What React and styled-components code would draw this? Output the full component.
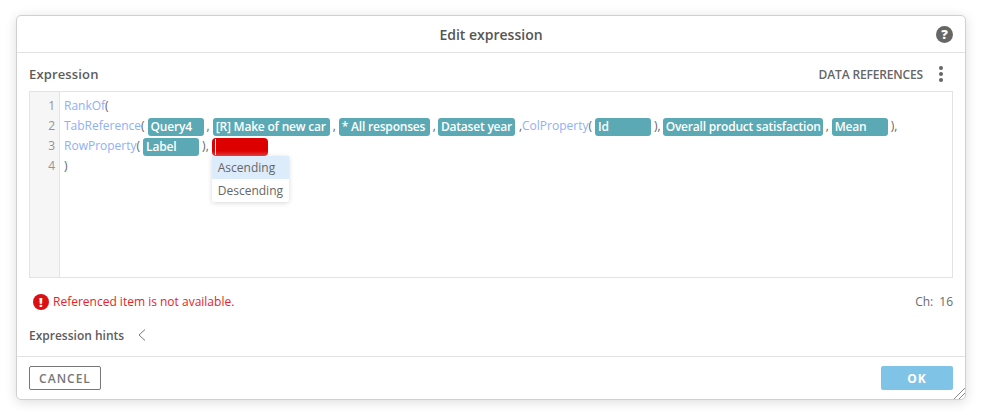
import styled, { createGlobalStyle } from "styled-components";

const GlobalStyle = createGlobalStyle`
  html, body {
    margin: 0;
    background: #fff;
    font-family: "Open Sans", "Liberation Sans", sans-serif;
  }
`;

const Page = styled.div`
  width: 982px;
  height: 415px;
  padding: 15px 16px;
  box-sizing: border-box;
  overflow: hidden;
`;

const Dialog = styled.div`
  position: relative;
  width: 950px;
  height: 385px;
  box-sizing: border-box;
  display: flex;
  flex-direction: column;
  background: #fff;
  border: 1px solid #d0d0d0;
  border-radius: 5px;
  box-shadow: 0 2px 12px rgba(0, 0, 0, 0.14);
`;

const Header = styled.header`
  height: 37px;
  flex: none;
  box-sizing: border-box;
  display: flex;
  align-items: center;
  justify-content: center;
  position: relative;
  border-bottom: 1px solid #e2e2e2;
  font-size: 14px;
  font-weight: 600;
  color: #555;
`;

const HelpIcon = styled.span`
  position: absolute;
  right: 12px;
  top: 10px;
  width: 17px;
  height: 17px;
  border-radius: 50%;
  background: #666;
  color: #fff;
  font-size: 13px;
  font-weight: 800;
  line-height: 17px;
  text-align: center;
`;

const Body = styled.div`
  flex: 1;
  display: flex;
  flex-direction: column;
  padding: 0 12px;
`;

const SectionBar = styled.div`
  height: 38px;
  flex: none;
  box-sizing: border-box;
  padding-top: 4px;
  display: flex;
  align-items: center;
  justify-content: space-between;
`;

const Label = styled.span`
  font-size: 12px;
  font-weight: 600;
  color: #5c5c5c;
`;

const SectionTitle = styled(Label)`
  font-size: 13px;
  letter-spacing: 0.15px;
`;

const BarActions = styled.div`
  display: flex;
  align-items: center;
  gap: 16px;
  font-size: 12px;
  font-weight: 600;
  letter-spacing: -0.15px;
  color: #666;
`;

const Kebab = styled.span`
  display: flex;
  flex-direction: column;
  gap: 2px;
  margin-right: 10px;
  i {
    width: 4px;
    height: 4px;
    border-radius: 50%;
    background: #666;
  }
`;

const Editor = styled.div`
  height: 187px;
  flex: none;
  box-sizing: border-box;
  display: flex;
  border: 1px solid #e3e3e3;
`;

const Gutter = styled.div`
  width: 30px;
  flex: none;
  box-sizing: border-box;
  padding: 5px 4px 0 0;
  background: #f6f6f6;
  border-right: 1px solid #e3e3e3;
  text-align: right;
`;

const LineNo = styled.div`
  height: 20px;
  line-height: 18px;
  font-size: 12px;
  color: #949494;
`;

const Code = styled.div`
  flex: 1;
  padding: 5px 0 0 4px;
`;

const CodeLine = styled.div`
  height: 20px;
  display: flex;
  align-items: flex-start;
  font-size: 12px;
  line-height: 18px;
  color: #666;
  white-space: pre;
`;

const Fn = styled.span`
  color: #8fb0f5;
`;

const Chip = styled.span`
  position: relative;
  flex: none;
  box-sizing: border-box;
  width: ${(p) => p.$w}px;
  height: 18px;
  margin: 1px ${(p) => p.$mr ?? 3}px 0 ${(p) => p.$ml ?? 3}px;
  padding: 0 3px;
  border-radius: 3px;
  background: #5aa9b4;
  color: #fff;
  font-size: 12px;
  font-weight: 600;
  letter-spacing: -0.2px;
  line-height: 18px;
`;

const ErrorChip = styled(Chip)`
  border-radius: 4px;
  background: linear-gradient(#dc0000 0, #dc0000 72%, #e44444 100%);
  &::before {
    content: "";
    position: absolute;
    left: 3px;
    top: 1px;
    bottom: 1px;
    width: 1px;
    background: #fff;
  }
`;

const Dropdown = styled.ul`
  position: absolute;
  left: 0;
  top: 18px;
  width: 77px;
  margin: 0;
  padding: 0;
  list-style: none;
  background: #fff;
  border-radius: 0 0 3px 3px;
  box-shadow: 0 1px 5px rgba(0, 0, 0, 0.16);
  overflow: hidden;
`;

const Option = styled.li`
  height: 23px;
  padding-left: 6px;
  line-height: 23px;
  font-size: 12px;
  font-weight: 400;
  letter-spacing: 0;
  color: #666;
  background: ${(p) => (p.$active ? "#dcecfb" : "#fff")};
`;

const StatusRow = styled.div`
  height: 20px;
  margin-top: 14px;
  flex: none;
  display: flex;
  align-items: center;
  justify-content: space-between;
`;

const ErrorMsg = styled.div`
  display: flex;
  align-items: center;
  gap: 4px;
  padding-left: 4px;
  font-size: 12px;
  color: #e8232a;
`;

const ErrorIcon = styled.span`
  width: 16px;
  height: 16px;
  border-radius: 50%;
  background: #dc0f14;
  color: #fff;
  font-size: 13px;
  font-weight: 800;
  line-height: 16px;
  text-align: center;
`;

const ErrorText = styled.span`
  padding-bottom: 2px;
`;

const CharCount = styled.div`
  display: flex;
  gap: 6px;
  padding-bottom: 2px;
  font-size: 12px;
  color: #6a6a6a;
`;

const Hints = styled.div`
  margin-top: 13px;
  height: 20px;
  flex: none;
  display: flex;
  align-items: center;
  gap: 14px;
`;

const Footer = styled.footer`
  height: 43px;
  margin-top: auto;
  flex: none;
  box-sizing: border-box;
  display: flex;
  align-items: center;
  justify-content: space-between;
  padding: 0 12px;
  border-top: 1px solid #e2e2e2;
`;

const Button = styled.button`
  width: 72px;
  height: 24px;
  padding: 0;
  box-sizing: border-box;
  border: ${(p) => (p.$primary ? "none" : "1px solid #777")};
  border-radius: 2px;
  background: ${(p) => (p.$primary ? "#7fc4e6" : "#fff")};
  color: ${(p) => (p.$primary ? "#fff" : "#777")};
  font-family: inherit;
  font-size: 12px;
  font-weight: ${(p) => (p.$primary ? 700 : 600)};
  letter-spacing: 1px;
`;

const ResizeHandle = styled.svg`
  position: absolute;
  right: 0;
  bottom: 0;
`;

export default function App() {
  return (
    <Page>
      <GlobalStyle />
      <Dialog>
        <Header>
          Edit expression
          <HelpIcon>?</HelpIcon>
        </Header>
        <Body>
          <SectionBar>
            <SectionTitle>Expression</SectionTitle>
            <BarActions>
              DATA REFERENCES
              <Kebab>
                <i />
                <i />
                <i />
              </Kebab>
            </BarActions>
          </SectionBar>
          <Editor>
            <Gutter>
              <LineNo>1</LineNo>
              <LineNo>2</LineNo>
              <LineNo>3</LineNo>
              <LineNo>4</LineNo>
            </Gutter>
            <Code>
              <CodeLine>
                <Fn>RankOf</Fn>(
              </CodeLine>
              <CodeLine>
                <Fn>TabReference</Fn>(
                <Chip $w={56}>Query4</Chip>,
                <Chip $w={117}>[R] Make of new car</Chip>,
                <Chip $w={91}>* All responses</Chip>,
                <Chip $w={77} $ml={2} $mr={4}>Dataset year</Chip>,
                <Fn>ColProperty</Fn>(
                <Chip $w={56}>Id</Chip>),
                <Chip $w={160} $ml={2}>Overall product satisfaction</Chip>,
                <Chip $w={56}>Mean</Chip>),
              </CodeLine>
              <CodeLine>
                <Fn>RowProperty</Fn>(
                <Chip $w={56}>Label</Chip>),
                <ErrorChip $w={56}>
                  <Dropdown>
                    <Option $active>Ascending</Option>
                    <Option>Descending</Option>
                  </Dropdown>
                </ErrorChip>
              </CodeLine>
              <CodeLine>)</CodeLine>
            </Code>
          </Editor>
          <StatusRow>
            <ErrorMsg>
              <ErrorIcon>!</ErrorIcon>
              <ErrorText>Referenced item is not available.</ErrorText>
            </ErrorMsg>
            <CharCount>
              <span>Ch:</span>
              <span>16</span>
            </CharCount>
          </StatusRow>
          <Hints>
            <Label>Expression hints</Label>
            <svg width="8" height="12" viewBox="0 0 8 12" fill="none" stroke="#777" strokeWidth="1">
              <path d="M7 0.5 L1 6 L7 11.5" />
            </svg>
          </Hints>
        </Body>
        <Footer>
          <Button>CANCEL</Button>
          <Button $primary>OK</Button>
        </Footer>
        <ResizeHandle width="12" height="12" viewBox="0 0 12 12" stroke="#888" strokeWidth="1">
          <path d="M1 12 L12 1 M6 12 L12 6" />
        </ResizeHandle>
      </Dialog>
    </Page>
  );
}
